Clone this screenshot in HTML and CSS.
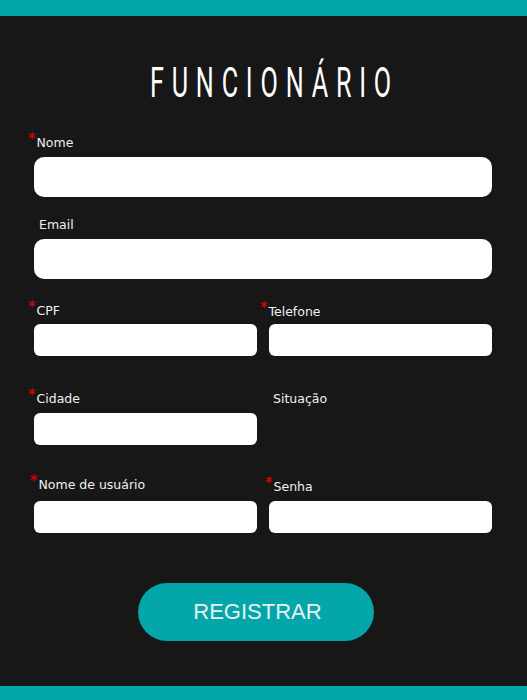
FILE: index.html
```html
<!DOCTYPE html>
<html lang="pt-BR">
<head>
<meta charset="utf-8">
<title>Funcionário</title>
<link rel="stylesheet" href="styles.css">
</head>
<body>
<div class="bar"></div>
<main class="form">
  <h1 class="title"><span class="title-text">FUNCIONÁRIO</span></h1>

  <div class="field field--nome">
    <label class="label label--req"><span class="req">*</span>Nome</label>
    <input class="input input--lg" type="text">
  </div>

  <div class="field field--email">
    <label class="label label--email">Email</label>
    <input class="input input--lg" type="text">
  </div>

  <div class="row row--cpf">
    <div class="field">
      <label class="label label--req label--gap6"><span class="req">*</span>CPF</label>
      <input class="input" type="text">
    </div>
    <div class="field">
      <label class="label label--tel label--gap5"><span class="req">*</span>Telefone</label>
      <input class="input" type="text">
    </div>
  </div>

  <div class="row row--cidade">
    <div class="field">
      <label class="label label--req"><span class="req">*</span>Cidade</label>
      <input class="input" type="text">
    </div>
    <div class="field">
      <label class="label label--sit">Situação</label>
    </div>
  </div>

  <div class="row row--user">
    <div class="field">
      <label class="label label--user label--gap9"><span class="req">*</span>Nome de usuário</label>
      <input class="input" type="text">
    </div>
    <div class="field">
      <label class="label label--senha"><span class="req">*</span>Senha</label>
      <input class="input" type="password">
    </div>
  </div>

  <div class="actions">
    <button class="submit" type="button">REGISTRAR</button>
  </div>
</main>
<div class="bar bar--bottom"></div>
</body>
</html>
```

FILE: styles.css
```css
* { box-sizing: border-box; }

html, body {
  margin: 0;
  padding: 0;
}

body {
  background: #171717;
  height: 700px;
  display: flex;
  flex-direction: column;
  font-family: "DejaVu Sans", Verdana, sans-serif;
  color: #ececec;
}

.bar {
  height: 16px;
  background: #03a6a9;
  flex: none;
}

.bar--bottom {
  height: 14px;
}

.form {
  flex: 1;
  padding: 46px 35px 0 34px;
  display: flex;
  flex-direction: column;
}

.title {
  margin: 0;
  padding-left: 22px;
  text-align: center;
  font-family: Roboto, "Noto Sans", sans-serif;
  font-weight: 400;
  font-size: 42px;
  line-height: 42px;
  color: #ffffff;
}

.title-text {
  display: inline-block;
  letter-spacing: 13px;
  transform: scaleX(0.6);
  transform-origin: center;
}

.field {
  display: flex;
  flex-direction: column;
}

.field--nome { margin-top: 31px; }
.field--email { margin-top: 20px; }

.label {
  display: block;
  height: 15px;
  font-size: 12.5px;
  line-height: 15px;
  margin-bottom: 7px;
  white-space: nowrap;
  color: #f0f0f0;
}

.label--req { margin-left: -6px; }
.label--email { margin-left: 5px; }
.label--tel { margin-left: -9px; padding-top: 1px; height: 16px; }
.label--sit { margin-left: 4px; }
.label--user { margin-left: -4px; }
.label--senha { margin-left: -4px; padding-top: 2px; height: 17px; }
.label--gap5 { margin-bottom: 5px; }
.label--gap6 { margin-bottom: 6px; }
.label--gap9 { margin-bottom: 9px; }

.req {
  color: #f00000;
  font-size: 15px;
  line-height: 0;
  vertical-align: 3px;
  margin-right: 1px;
}

.input {
  display: block;
  width: 100%;
  height: 32px;
  border: none;
  outline: none;
  background: #ffffff;
  border-radius: 6px;
  padding: 0 10px;
  margin: 0;
  font: inherit;
}

.input--lg {
  height: 40px;
  border-radius: 10px;
}

.row {
  display: grid;
  grid-template-columns: 1fr 1fr;
  column-gap: 12px;
}

.row--cpf { margin-top: 24px; }
.row--cidade { margin-top: 35px; }
.row--user { margin-top: 32px; }

.actions {
  margin-top: 50px;
  display: flex;
  justify-content: center;
  padding-right: 14px;
}

.submit {
  width: 236px;
  height: 58px;
  border: none;
  border-radius: 29px;
  background: #03a6a9;
  color: #e8f1f1;
  font-family: "Liberation Sans", Arial, sans-serif;
  font-size: 22px;
  padding: 0 0 0 3px;
  cursor: pointer;
}
```
